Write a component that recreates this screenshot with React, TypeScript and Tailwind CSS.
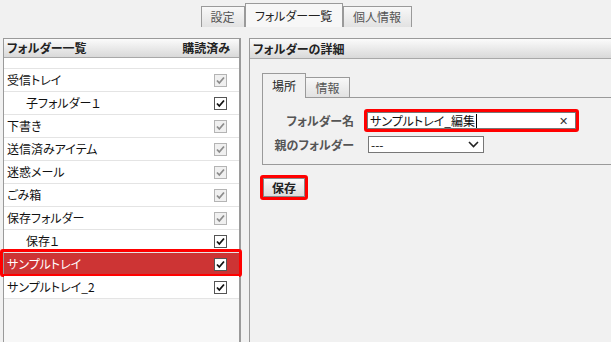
import React from "react";

type Folder = { name: string; indent?: boolean; locked?: boolean; selected?: boolean };

const folders: Folder[] = [
  { name: "受信トレイ", locked: true },
  { name: "子フォルダー１", indent: true },
  { name: "下書き", locked: true },
  { name: "送信済みアイテム", locked: true },
  { name: "迷惑メール", locked: true },
  { name: "ごみ箱", locked: true },
  { name: "保存フォルダー", locked: true },
  { name: "保存１", indent: true },
  { name: "サンプルトレイ", selected: true },
  { name: "サンプルトレイ_2" },
];

const CheckBox = ({ locked }: { locked?: boolean }) => (
  <span
    className={
      locked
        ? "flex h-[13px] w-[13px] items-center justify-center border border-[#b4b4b4] bg-[#f0f0f0]"
        : "flex h-[13px] w-[13px] items-center justify-center border border-[#555] bg-white"
    }
  >
    <svg width="9" height="9" viewBox="0 0 9 9">
      <path
        d="M1 4.5 L3.3 7 L8 1.5"
        fill="none"
        stroke={locked ? "#8c8c8c" : "#111"}
        strokeWidth="1.8"
      />
    </svg>
  </span>
);

const TopTab = ({ label, width, active }: { label: string; width: string; active?: boolean }) => (
  <div
    className={
      active
        ? `flex h-[24px] items-center justify-center border border-b-0 border-[#9a9a9a] bg-[#f7f7f7] text-[#222] ${width}`
        : `flex h-[21px] items-center justify-center border border-b-0 border-[#9a9a9a] bg-gradient-to-b from-[#f8f8f8] to-[#e2e2e2] text-[#555] ${width}`
    }
  >
    {label}
  </div>
);

export default function App() {
  return (
    <div
      className="flex h-[342px] w-[611px] flex-col overflow-hidden bg-[#f1f1f1] text-[12px] leading-none text-[#111] [font-feature-settings:'palt']"
      style={{ fontFamily: '"Noto Sans CJK JP", "Noto Sans", sans-serif' }}
    >
      {/* top tabs */}
      <div className="flex h-[27px] items-end justify-center pl-[1px]">
        <TopTab label="設定" width="w-[44px]" />
        <TopTab label="フォルダー一覧" width="w-[98px]" active />
        <TopTab label="個人情報" width="w-[69px]" />
      </div>

      <div className="mt-[11px] flex flex-1 gap-[8px] pl-[3px]">
        {/* folder list */}
        <div className="flex w-[238px] flex-col border border-r-2 border-b-0 border-[#9a9a9a] bg-[#f7f7f7]">
          <div className="flex h-[19px] items-center justify-between border-b border-[#a8a8a8] bg-gradient-to-b from-[#fbfbfb] to-[#d9d9d9] px-[3px] font-bold text-[#222]">
            <span>フォルダー一覧</span>
            <span className="pr-[6px]">購読済み</span>
          </div>
          <div className="h-[11px] border-b border-[#e4e4e4] bg-white" />
          {folders.map((f) => (
            <div
              key={f.name}
              className={
                f.selected
                  ? "relative flex h-[23px] items-center justify-between border-b border-[#e4e4e4] bg-[#cd3434] pr-[12px] text-white"
                  : "relative flex h-[23px] items-center justify-between border-b border-[#e4e4e4] bg-white pr-[12px]"
              }
            >
              <span className={f.indent ? "pl-[22px]" : "pl-[3px]"}>{f.name}</span>
              <CheckBox locked={f.locked} />
              {f.selected && (
                <span className="pointer-events-none absolute -top-[4px] -bottom-[2px] -left-[4px] -right-[3px] rounded-[3px] border-[3px] border-[#f00]" />
              )}
            </div>
          ))}
        </div>

        {/* folder detail */}
        <div className="-mr-[6px] flex flex-1 flex-col border border-r-0 border-b-0 border-[#9a9a9a] bg-[#f1f1f1]">
          <div className="flex h-[20px] items-center border-b border-[#a8a8a8] bg-gradient-to-b from-[#fbfbfb] to-[#d9d9d9] px-[3px] font-bold text-[#222]">
            フォルダーの詳細
          </div>

          <div className="pl-[12px] pt-[14px]">
            <div className="flex items-end">
              <div className="relative -mb-[1px] flex h-[25px] w-[44px] items-center justify-center border border-b-0 border-[#9a9a9a] bg-[#f1f1f1] text-[#222]">
                場所
              </div>
              <div className="flex h-[20px] w-[44px] items-center justify-center border border-l-0 border-b-0 border-[#9a9a9a] bg-gradient-to-b from-[#f8f8f8] to-[#e2e2e2] text-[#555]">
                情報
              </div>
            </div>
            <div className="flex h-[68px] flex-col gap-[4px] border border-r-0 border-[#9a9a9a] pt-[11px]">
              <div className="flex items-center">
                <span className="w-[91px] text-right font-bold text-[#555]">フォルダー名</span>
                <div className="ml-[10px] rounded-[3px] border-[3px] border-[#f00]">
                  <div className="flex h-[17px] w-[209px] items-center justify-between border border-[#777] bg-white pl-[2px] pr-[7px]">
                    <span className="flex items-center">
                      サンプルトレイ_編集
                      <span className="ml-[1px] inline-block h-[14px] w-[1px] bg-black" />
                    </span>
                    <span className="text-[11px] text-[#333]">✕</span>
                  </div>
                </div>
              </div>
              <div className="flex items-center">
                <span className="w-[91px] text-right font-bold text-[#555]">親のフォルダー</span>
                <div className="ml-[14px] flex h-[17px] w-[116px] items-center justify-between border border-[#777] bg-white pl-[2px] pr-[4px]">
                  <span>---</span>
                  <svg width="11" height="7" viewBox="0 0 11 7">
                    <path d="M1 1 L5.5 5.5 L10 1" fill="none" stroke="#222" strokeWidth="1.6" />
                  </svg>
                </div>
              </div>
            </div>
          </div>

          <div className="ml-[10px] mt-[10px] w-fit rounded-[3px] border-[3px] border-[#f00]">
            <div className="flex h-[19px] w-[42px] items-center justify-center border border-[#888] bg-gradient-to-b from-[#fafafa] to-[#dcdcdc] font-bold text-[#222]">
              保存
            </div>
          </div>
        </div>
      </div>
    </div>
  );
}
